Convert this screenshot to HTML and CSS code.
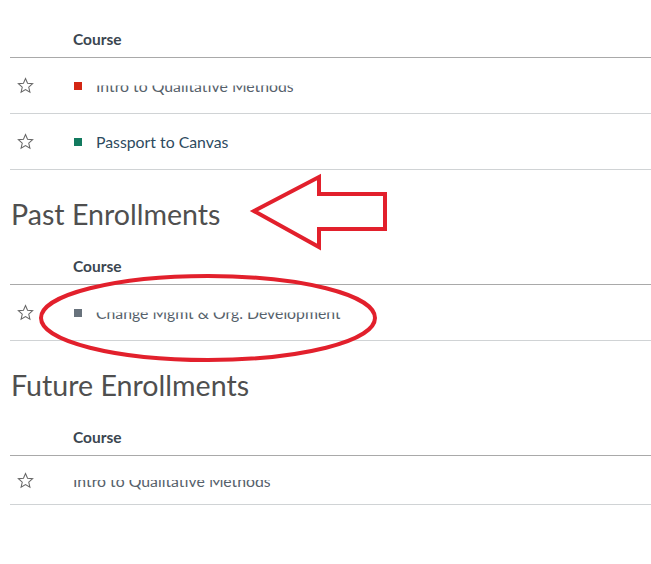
FILE: index.html
```html
<!DOCTYPE html>
<html lang="en">
<head>
    <meta charset="UTF-8">
    <title>Courses</title>
    <link rel="stylesheet" href="styles.css">
</head>
<body>

    <div class="page">
        <div class="table">
            <div class="head-row">
                <div class="cell-star"></div>
                <div class="cell-course">Course</div>
            </div>
            <div class="row">
                <div class="cell-star"><svg class="star" viewBox="0 0 20 20"><path d="M10 1.8l2.4 5.6 6 .5-4.6 4 1.4 5.9L10 14.7l-5.2 3.1 1.4-5.9-4.6-4 6-.5z"/></svg></div>
                <div class="cell-course"><span class="swatch red"></span><span class="name clipped">Intro to Qualitative Methods</span></div>
            </div>
            <div class="row">
                <div class="cell-star"><svg class="star" viewBox="0 0 20 20"><path d="M10 1.8l2.4 5.6 6 .5-4.6 4 1.4 5.9L10 14.7l-5.2 3.1 1.4-5.9-4.6-4 6-.5z"/></svg></div>
                <div class="cell-course"><span class="swatch green"></span><span class="name">Passport to Canvas</span></div>
            </div>
        </div>

        <h2>Past Enrollments</h2>
        <div class="table">
            <div class="head-row">
                <div class="cell-star"></div>
                <div class="cell-course">Course</div>
            </div>
            <div class="row">
                <div class="cell-star"><svg class="star" viewBox="0 0 20 20"><path d="M10 1.8l2.4 5.6 6 .5-4.6 4 1.4 5.9L10 14.7l-5.2 3.1 1.4-5.9-4.6-4 6-.5z"/></svg></div>
                <div class="cell-course"><span class="swatch grey"></span><span class="name clipped">Change Mgmt &amp; Org. Development</span></div>
            </div>
        </div>

        <h2>Future Enrollments</h2>
        <div class="table">
            <div class="head-row">
                <div class="cell-star"></div>
                <div class="cell-course">Course</div>
            </div>
            <div class="row short">
                <div class="cell-star"><svg class="star" viewBox="0 0 20 20"><path d="M10 1.8l2.4 5.6 6 .5-4.6 4 1.4 5.9L10 14.7l-5.2 3.1 1.4-5.9-4.6-4 6-.5z"/></svg></div>
                <div class="cell-course"><span class="name clipped">Intro to Qualitative Methods</span></div>
            </div>
        </div>
    </div>

    <!-- annotation drawn over the screenshot -->
    <svg class="markup" width="651" height="564" viewBox="0 0 651 564">
        <polygon points="254,211 319,177 319,194 385,194 385,229 319,229 319,247"/>
        <ellipse cx="208" cy="318" rx="167" ry="42"/>
    </svg>

</body>
</html>
```

FILE: styles.css
```css
body {
    font-family: Lato, 'Open Sans', sans-serif;
    background-color: #fff;
    color: #2d3b45;
    margin: 0;
    padding: 0;
}
.page {
    padding: 20px 0 0 10px;
}
.head-row {
    display: flex;
    align-items: center;
    height: 37px;
    border-bottom: 1px solid #a9a9a9;
    font-size: 15.5px;
    font-weight: bold;
    color: #3b4650;
}
.row {
    display: flex;
    align-items: center;
    height: 55px;
    border-bottom: 1px solid #d0d3d5;
    font-size: 15.8px;
}
.row.short {
    height: 48px;
}
.cell-star {
    width: 63px;
    flex: none;
    display: flex;
    align-items: center;
    padding-left: 7px;
    box-sizing: border-box;
}
.star {
    width: 17px;
    height: 17px;
    fill: none;
    stroke: #666;
    stroke-width: 1.2;
}
.cell-course {
    display: flex;
    align-items: center;
}
.swatch {
    width: 8px;
    height: 8px;
    margin: 0 14px 0 1px;
}
.red {
    background-color: #d32614;
}
.green {
    background-color: #127a5f;
}
.grey {
    background-color: #68727c;
}
.name {
    color: #2d4a5e;
}
.clipped {
    color: #56616b;
    clip-path: inset(50% 0 0 0);
}
h2 {
    font-weight: normal;
    font-size: 28.6px;
    line-height: 32px;
    color: #4f4f4f;
    margin: 28px 0 17px 1px;
}
.markup {
    position: absolute;
    top: 0;
    left: 0;
    pointer-events: none;
}
.markup polygon,
.markup ellipse {
    fill: none;
    stroke: #e2202c;
    stroke-width: 4;
}
```
